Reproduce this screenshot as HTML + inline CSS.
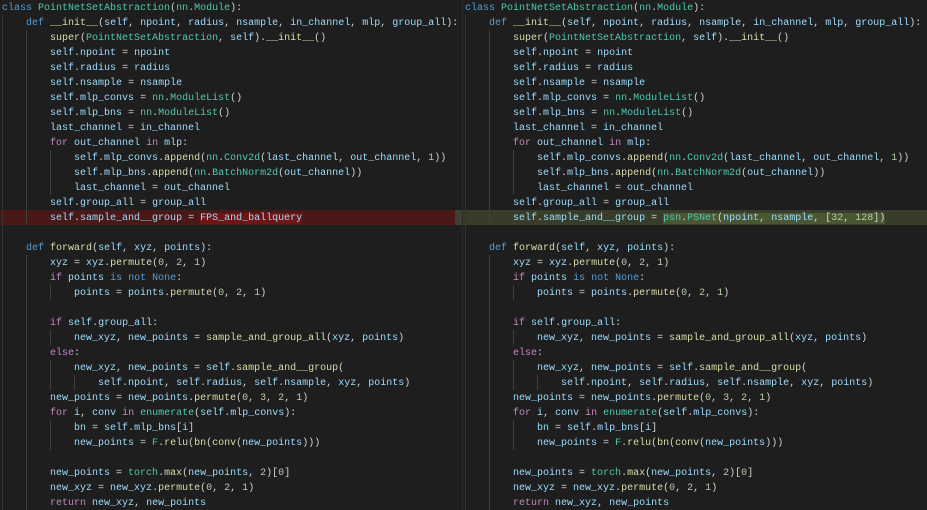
<!DOCTYPE html>
<html><head><meta charset="utf-8"><style>
body{margin:0;width:927px;height:510px;background:#1e1e1e;overflow:hidden;position:relative}
.p{position:absolute;top:1px;height:509px;overflow:hidden}
pre{margin:0;font-family:"Liberation Mono",monospace;font-size:10px;line-height:15px;color:#d4d4d4;position:relative;white-space:pre}
.k{color:#569cd6}.c{color:#c586c0}.f{color:#dcdcaa}.t{color:#4ec9b0}.v{color:#9cdcfe}.n{color:#b5cea8}
.g{position:absolute;width:1px;background:#404040}
.del{position:absolute;left:0;width:462px;top:210px;height:15px;background:#4b1818}
.delw{background:#6f1515}
.add{position:absolute;left:462px;width:465px;top:210px;height:15px;background:#373d29}
.addw{background:#4b5632}
</style></head><body>
<div class="del"></div>
<div class="add"></div>
<div style="position:absolute;left:462px;top:0;width:1px;height:510px;background:#2b2b2b"></div>
<div style="position:absolute;left:455px;top:210px;width:7px;height:15px;background:#3c4232"></div>

<div class="g" style="left:2px;top:15px;height:495px;background:#333"></div>
<div class="g" style="left:26px;top:30px;height:195px"></div>
<div class="g" style="left:26px;top:255px;height:255px"></div>
<div class="g" style="left:50px;top:150px;height:45px"></div>
<div class="g" style="left:50px;top:285px;height:15px"></div>
<div class="g" style="left:50px;top:330px;height:15px"></div>
<div class="g" style="left:50px;top:360px;height:30px"></div>
<div class="g" style="left:74px;top:375px;height:15px"></div>
<div class="g" style="left:50px;top:420px;height:30px"></div>

<div class="g" style="left:465px;top:15px;height:495px;background:#333"></div>
<div class="g" style="left:489px;top:30px;height:195px"></div>
<div class="g" style="left:489px;top:255px;height:255px"></div>
<div class="g" style="left:513px;top:150px;height:45px"></div>
<div class="g" style="left:513px;top:285px;height:15px"></div>
<div class="g" style="left:513px;top:330px;height:15px"></div>
<div class="g" style="left:513px;top:360px;height:30px"></div>
<div class="g" style="left:537px;top:375px;height:15px"></div>
<div class="g" style="left:513px;top:420px;height:30px"></div>

<div class="p" style="left:2px;width:455px">
<pre><span class="k">class</span> <span class="t">PointNetSetAbstraction</span>(<span class="t">nn</span>.<span class="t">Module</span>):
    <span class="k">def</span> <span class="f">__init__</span>(<span class="v">self</span>, <span class="v">npoint</span>, <span class="v">radius</span>, <span class="v">nsample</span>, <span class="v">in_channel</span>, <span class="v">mlp</span>, <span class="v">group_all</span>):
        <span class="f">super</span>(<span class="t">PointNetSetAbstraction</span>, <span class="v">self</span>).<span class="f">__init__</span>()
        <span class="v">self</span>.<span class="v">npoint</span> = <span class="v">npoint</span>
        <span class="v">self</span>.<span class="v">radius</span> = <span class="v">radius</span>
        <span class="v">self</span>.<span class="v">nsample</span> = <span class="v">nsample</span>
        <span class="v">self</span>.<span class="v">mlp_convs</span> = <span class="t">nn</span>.<span class="t">ModuleList</span>()
        <span class="v">self</span>.<span class="v">mlp_bns</span> = <span class="t">nn</span>.<span class="t">ModuleList</span>()
        <span class="v">last_channel</span> = <span class="v">in_channel</span>
        <span class="c">for</span> <span class="v">out_channel</span> <span class="c">in</span> <span class="v">mlp</span>:
            <span class="v">self</span>.<span class="v">mlp_convs</span>.<span class="f">append</span>(<span class="t">nn</span>.<span class="t">Conv2d</span>(<span class="v">last_channel</span>, <span class="v">out_channel</span>, <span class="n">1</span>))
            <span class="v">self</span>.<span class="v">mlp_bns</span>.<span class="f">append</span>(<span class="t">nn</span>.<span class="t">BatchNorm2d</span>(<span class="v">out_channel</span>))
            <span class="v">last_channel</span> = <span class="v">out_channel</span>
        <span class="v">self</span>.<span class="v">group_all</span> = <span class="v">group_all</span>
        <span class="v">self</span>.<span class="v">sample_and__group</span> = <span class="v delw">FPS_and_ballquery</span>

    <span class="k">def</span> <span class="f">forward</span>(<span class="v">self</span>, <span class="v">xyz</span>, <span class="v">points</span>):
        <span class="v">xyz</span> = <span class="v">xyz</span>.<span class="f">permute</span>(<span class="n">0</span>, <span class="n">2</span>, <span class="n">1</span>)
        <span class="c">if</span> <span class="v">points</span> <span class="k">is</span> <span class="k">not</span> <span class="k">None</span>:
            <span class="v">points</span> = <span class="v">points</span>.<span class="f">permute</span>(<span class="n">0</span>, <span class="n">2</span>, <span class="n">1</span>)

        <span class="c">if</span> <span class="v">self</span>.<span class="v">group_all</span>:
            <span class="v">new_xyz</span>, <span class="v">new_points</span> = <span class="f">sample_and_group_all</span>(<span class="v">xyz</span>, <span class="v">points</span>)
        <span class="c">else</span>:
            <span class="v">new_xyz</span>, <span class="v">new_points</span> = <span class="v">self</span>.<span class="f">sample_and__group</span>(
                <span class="v">self</span>.<span class="v">npoint</span>, <span class="v">self</span>.<span class="v">radius</span>, <span class="v">self</span>.<span class="v">nsample</span>, <span class="v">xyz</span>, <span class="v">points</span>)
        <span class="v">new_points</span> = <span class="v">new_points</span>.<span class="f">permute</span>(<span class="n">0</span>, <span class="n">3</span>, <span class="n">2</span>, <span class="n">1</span>)
        <span class="c">for</span> <span class="v">i</span>, <span class="v">conv</span> <span class="c">in</span> <span class="t">enumerate</span>(<span class="v">self</span>.<span class="v">mlp_convs</span>):
            <span class="v">bn</span> = <span class="v">self</span>.<span class="v">mlp_bns</span>[<span class="v">i</span>]
            <span class="v">new_points</span> = <span class="t">F</span>.<span class="f">relu</span>(<span class="f">bn</span>(<span class="f">conv</span>(<span class="v">new_points</span>)))

        <span class="v">new_points</span> = <span class="t">torch</span>.<span class="f">max</span>(<span class="v">new_points</span>, <span class="n">2</span>)[<span class="n">0</span>]
        <span class="v">new_xyz</span> = <span class="v">new_xyz</span>.<span class="f">permute</span>(<span class="n">0</span>, <span class="n">2</span>, <span class="n">1</span>)
        <span class="c">return</span> <span class="v">new_xyz</span>, <span class="v">new_points</span></pre>
</div>

<div class="p" style="left:465px;width:462px">
<pre><span class="k">class</span> <span class="t">PointNetSetAbstraction</span>(<span class="t">nn</span>.<span class="t">Module</span>):
    <span class="k">def</span> <span class="f">__init__</span>(<span class="v">self</span>, <span class="v">npoint</span>, <span class="v">radius</span>, <span class="v">nsample</span>, <span class="v">in_channel</span>, <span class="v">mlp</span>, <span class="v">group_all</span>):
        <span class="f">super</span>(<span class="t">PointNetSetAbstraction</span>, <span class="v">self</span>).<span class="f">__init__</span>()
        <span class="v">self</span>.<span class="v">npoint</span> = <span class="v">npoint</span>
        <span class="v">self</span>.<span class="v">radius</span> = <span class="v">radius</span>
        <span class="v">self</span>.<span class="v">nsample</span> = <span class="v">nsample</span>
        <span class="v">self</span>.<span class="v">mlp_convs</span> = <span class="t">nn</span>.<span class="t">ModuleList</span>()
        <span class="v">self</span>.<span class="v">mlp_bns</span> = <span class="t">nn</span>.<span class="t">ModuleList</span>()
        <span class="v">last_channel</span> = <span class="v">in_channel</span>
        <span class="c">for</span> <span class="v">out_channel</span> <span class="c">in</span> <span class="v">mlp</span>:
            <span class="v">self</span>.<span class="v">mlp_convs</span>.<span class="f">append</span>(<span class="t">nn</span>.<span class="t">Conv2d</span>(<span class="v">last_channel</span>, <span class="v">out_channel</span>, <span class="n">1</span>))
            <span class="v">self</span>.<span class="v">mlp_bns</span>.<span class="f">append</span>(<span class="t">nn</span>.<span class="t">BatchNorm2d</span>(<span class="v">out_channel</span>))
            <span class="v">last_channel</span> = <span class="v">out_channel</span>
        <span class="v">self</span>.<span class="v">group_all</span> = <span class="v">group_all</span>
        <span class="v">self</span>.<span class="v">sample_and__group</span> = <span class="addw"><span class="t">psn</span>.<span class="t">PSNet</span>(<span class="v">npoint</span>, <span class="v">nsample</span>, [<span class="n">32</span>, <span class="n">128</span>])</span>

    <span class="k">def</span> <span class="f">forward</span>(<span class="v">self</span>, <span class="v">xyz</span>, <span class="v">points</span>):
        <span class="v">xyz</span> = <span class="v">xyz</span>.<span class="f">permute</span>(<span class="n">0</span>, <span class="n">2</span>, <span class="n">1</span>)
        <span class="c">if</span> <span class="v">points</span> <span class="k">is</span> <span class="k">not</span> <span class="k">None</span>:
            <span class="v">points</span> = <span class="v">points</span>.<span class="f">permute</span>(<span class="n">0</span>, <span class="n">2</span>, <span class="n">1</span>)

        <span class="c">if</span> <span class="v">self</span>.<span class="v">group_all</span>:
            <span class="v">new_xyz</span>, <span class="v">new_points</span> = <span class="f">sample_and_group_all</span>(<span class="v">xyz</span>, <span class="v">points</span>)
        <span class="c">else</span>:
            <span class="v">new_xyz</span>, <span class="v">new_points</span> = <span class="v">self</span>.<span class="f">sample_and__group</span>(
                <span class="v">self</span>.<span class="v">npoint</span>, <span class="v">self</span>.<span class="v">radius</span>, <span class="v">self</span>.<span class="v">nsample</span>, <span class="v">xyz</span>, <span class="v">points</span>)
        <span class="v">new_points</span> = <span class="v">new_points</span>.<span class="f">permute</span>(<span class="n">0</span>, <span class="n">3</span>, <span class="n">2</span>, <span class="n">1</span>)
        <span class="c">for</span> <span class="v">i</span>, <span class="v">conv</span> <span class="c">in</span> <span class="t">enumerate</span>(<span class="v">self</span>.<span class="v">mlp_convs</span>):
            <span class="v">bn</span> = <span class="v">self</span>.<span class="v">mlp_bns</span>[<span class="v">i</span>]
            <span class="v">new_points</span> = <span class="t">F</span>.<span class="f">relu</span>(<span class="f">bn</span>(<span class="f">conv</span>(<span class="v">new_points</span>)))

        <span class="v">new_points</span> = <span class="t">torch</span>.<span class="f">max</span>(<span class="v">new_points</span>, <span class="n">2</span>)[<span class="n">0</span>]
        <span class="v">new_xyz</span> = <span class="v">new_xyz</span>.<span class="f">permute</span>(<span class="n">0</span>, <span class="n">2</span>, <span class="n">1</span>)
        <span class="c">return</span> <span class="v">new_xyz</span>, <span class="v">new_points</span></pre>
</div>
</body></html>
